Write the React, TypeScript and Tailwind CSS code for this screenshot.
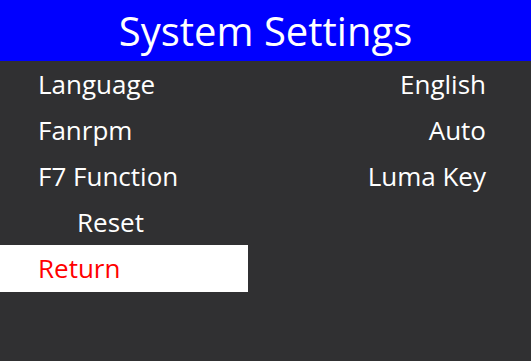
const rows = [
  { label: "Language", value: "English" },
  { label: "Fanrpm", value: "Auto" },
  { label: "F7 Function", value: "Luma Key" },
  { label: "Reset", value: "", indent: true },
  { label: "Return", value: "", selected: true },
];

export default function App() {
  return (
    <div
      className="flex h-[361px] w-[531px] flex-col bg-[#303032] text-white"
      style={{ fontFamily: '"Open Sans", "Noto Sans", sans-serif' }}
    >
      <div className="flex h-[61px] items-center justify-center bg-[#0000ff] text-[40px] leading-none">
        System Settings
      </div>
      <div className="flex flex-col">
        {rows.map((row) => (
          <div
            key={row.label}
            className={"flex items-center " + (row.selected ? "h-[47px]" : "h-[46px]")}
          >
            <div
              className={
                "flex h-full w-[248px] items-center text-[26px] " +
                (row.selected ? "bg-white text-[#ff0000] " : "") +
                (row.indent ? "pl-[77px]" : "pl-[38px]")
              }
            >
              {row.label}
            </div>
            <div className="flex-1 pr-[45px] text-right text-[26px]">{row.value}</div>
          </div>
        ))}
      </div>
    </div>
  );
}
